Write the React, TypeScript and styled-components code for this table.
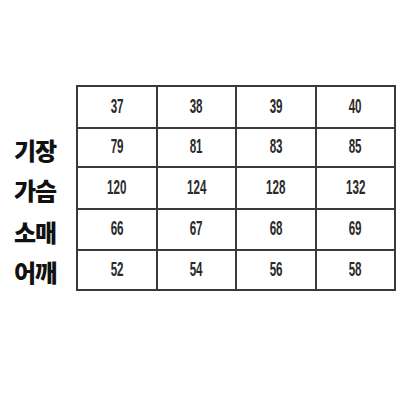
import React from "react";
import styled, { createGlobalStyle } from "styled-components";

const Global = createGlobalStyle`
  html, body { margin: 0; padding: 0; background: #ffffff; }
  body { width: 400px; height: 400px; overflow: hidden; }
`;

const Page = styled.div`
  display: grid;
  grid-template-columns: 76px 320px;
  align-items: start;
  padding-top: 85px;
  width: 400px;
  height: 400px;
  box-sizing: border-box;
  background: #fff;
`;

const rowTemplate = "40px 37px 40px 39px 38px";

const LabelColumn = styled.div`
  display: grid;
  grid-template-rows: ${rowTemplate};
  row-gap: 2px;
  padding: 2px 0 2px 14px;
`;

const Label = styled.div`
  display: flex;
  align-items: center;
  padding-top: 4px;
  font-family: "Noto Sans CJK KR", "Noto Sans", sans-serif;
  font-weight: 900;
  font-size: 24px;
  line-height: 1;
  color: #111;
  letter-spacing: -1px;
`;

const Table = styled.div`
  display: grid;
  grid-template-columns: 78px 77px 78px 77px;
  grid-template-rows: ${rowTemplate};
  gap: 2px;
  padding: 2px;
  background: #3a3a3a;
`;

const Cell = styled.div`
  background: #fff;
  display: flex;
  align-items: center;
  justify-content: center;
`;

const Num = styled.span`
  display: inline-block;
  font-family: "Liberation Sans", Arial, sans-serif;
  font-weight: 700;
  font-size: 20px;
  line-height: 1;
  color: #2a2a2a;
  transform: scaleX(0.58);
  margin-top: -3px;
`;

const labels = ["", "기장", "가슴", "소매", "어깨"];
const rows = [
  ["37", "38", "39", "40"],
  ["79", "81", "83", "85"],
  ["120", "124", "128", "132"],
  ["66", "67", "68", "69"],
  ["52", "54", "56", "58"],
];

export default function App() {
  return (
    <>
      <Global />
      <Page>
        <LabelColumn>
          {labels.map((l, i) => (
            <Label key={i}>{l}</Label>
          ))}
        </LabelColumn>
        <Table>
          {rows.map((r, i) =>
            r.map((v, j) => (
              <Cell key={`${i}-${j}`}>
                <Num>{v}</Num>
              </Cell>
            ))
          )}
        </Table>
      </Page>
    </>
  );
}
